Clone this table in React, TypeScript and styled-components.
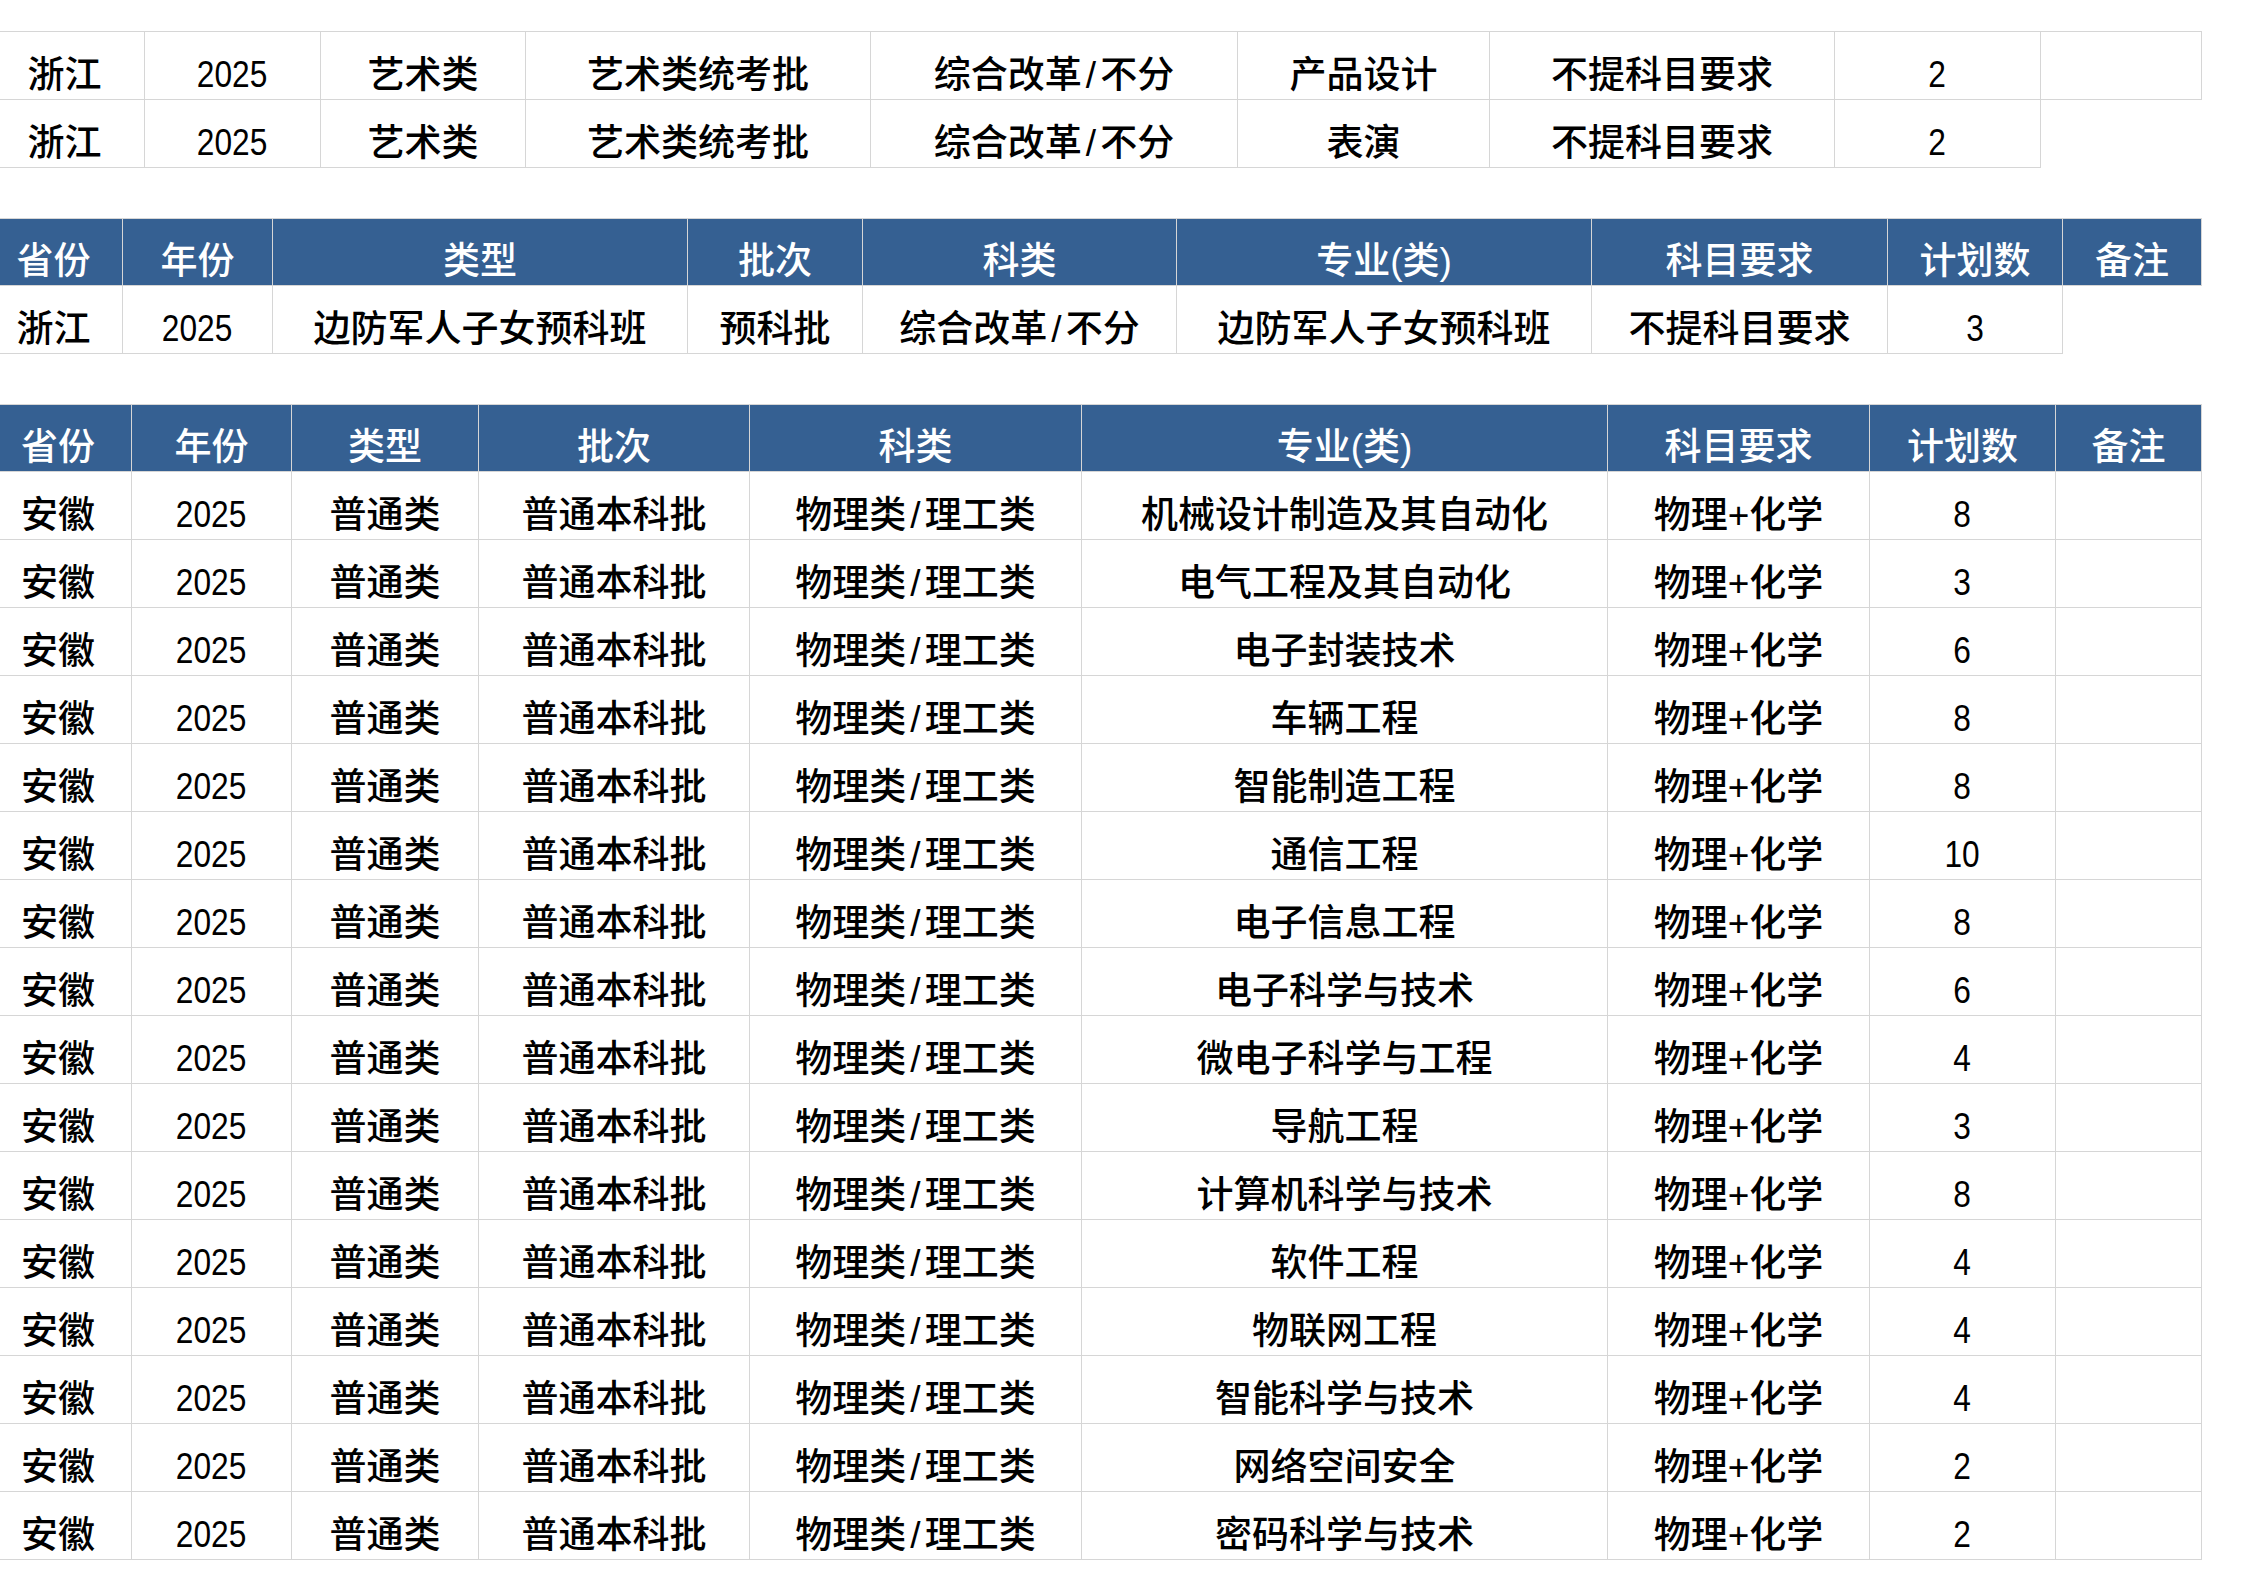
import React from "react";
import styled, { createGlobalStyle } from "styled-components";

const Global = createGlobalStyle`
  html, body { margin: 0; padding: 0; background: #ffffff; }
  body { font-family: "Liberation Sans", "Noto Sans CJK SC", sans-serif; color: #000; }
`;

const Page = styled.div`
  display: flex;
  flex-direction: column;
  gap: 50px;
  padding-top: 31px;
  overflow: hidden;
  width: 2245px;
`;

const Sheet = styled.div<{ $cols: number[]; $rows?: string }>`
  display: grid;
  grid-template-columns: ${(p) => p.$cols.map((c) => `${c}px`).join(" ")};
  grid-template-rows: ${(p) => p.$rows ?? "none"};
  grid-auto-rows: 68px;
  margin-left: -15px;
  width: max-content;
  border-top: 1px solid #d6d6d6;
`;

const HeadRow = styled.div`
  display: contents;
`;

const Cell = styled.div<{ $head?: boolean; $num?: boolean }>`
  box-sizing: border-box;
  display: flex;
  align-items: flex-end;
  justify-content: center;
  padding-bottom: ${(p) => (p.$num ? "6px" : "5px")};
  border-right: 1px solid #d6d6d6;
  border-bottom: 1px solid #d6d6d6;
  background: ${(p) => (p.$head ? "#356092" : "transparent")};
  color: ${(p) => (p.$head ? "#ffffff" : "#000000")};
  font-size: ${(p) => (p.$num ? "36px" : "37px")};
  line-height: 36px;
  font-weight: 500;
  white-space: nowrap;
`;

const Digits = styled.span`
  display: inline-block;
  font-weight: 400;
  transform: scaleX(0.88);
`;

const Slash = styled.span`
  display: inline-block;
  margin: 0 4px;
  font-weight: 400;
`;

const HeadCell = styled(Cell)`
  height: 67px;
  align-self: start;
`;

const headers = ["省份", "年份", "类型", "批次", "科类", "专业(类)", "科目要求", "计划数", "备注"];

const isNum = (s: string) => /^\d+$/.test(s);

function Text({ value }: { value: string }) {
  if (isNum(value)) return <Digits>{value}</Digits>;
  const parts = value.split("/");
  return (
    <>
      {parts.map((p, i) => (
        <React.Fragment key={i}>
          {i > 0 && <Slash>/</Slash>}
          {p}
        </React.Fragment>
      ))}
    </>
  );
}

function Row({ cells }: { cells: string[] }) {
  return (
    <>
      {cells.map((c, i) => (
        <Cell key={i} $num={isNum(c)}>
          <Text value={c} />
        </Cell>
      ))}
    </>
  );
}

function Header() {
  return (
    <HeadRow>
      {headers.map((h) => (
        <HeadCell key={h} $head>
          {h}
        </HeadCell>
      ))}
    </HeadRow>
  );
}

const art: string[][] = [
  ["浙江", "2025", "艺术类", "艺术类统考批", "综合改革/不分", "产品设计", "不提科目要求", "2", ""],
  ["浙江", "2025", "艺术类", "艺术类统考批", "综合改革/不分", "表演", "不提科目要求", "2"],
];

const prep: string[] = ["浙江", "2025", "边防军人子女预科班", "预科批", "综合改革/不分", "边防军人子女预科班", "不提科目要求", "3"];

const majors: [string, string][] = [
  ["机械设计制造及其自动化", "8"],
  ["电气工程及其自动化", "3"],
  ["电子封装技术", "6"],
  ["车辆工程", "8"],
  ["智能制造工程", "8"],
  ["通信工程", "10"],
  ["电子信息工程", "8"],
  ["电子科学与技术", "6"],
  ["微电子科学与工程", "4"],
  ["导航工程", "3"],
  ["计算机科学与技术", "8"],
  ["软件工程", "4"],
  ["物联网工程", "4"],
  ["智能科学与技术", "4"],
  ["网络空间安全", "2"],
  ["密码科学与技术", "2"],
];

export default function App() {
  return (
    <>
      <Global />
      <Page>
        <Sheet $cols={[160, 176, 205, 345, 367, 252, 345, 206, 161]}>
          {art.map((r, i) => (
            <Row key={i} cells={r} />
          ))}
        </Sheet>
        <Sheet $cols={[138, 150, 415, 175, 314, 415, 296, 175, 139]} $rows="67px 68px">
          <Header />
          <Row cells={prep} />
        </Sheet>
        <Sheet $cols={[147, 160, 187, 271, 332, 526, 262, 186, 146]} $rows="67px">
          <Header />
          {majors.map(([m, n], i) => (
            <Row key={i} cells={["安徽", "2025", "普通类", "普通本科批", "物理类/理工类", m, "物理+化学", n, ""]} />
          ))}
        </Sheet>
      </Page>
    </>
  );
}
